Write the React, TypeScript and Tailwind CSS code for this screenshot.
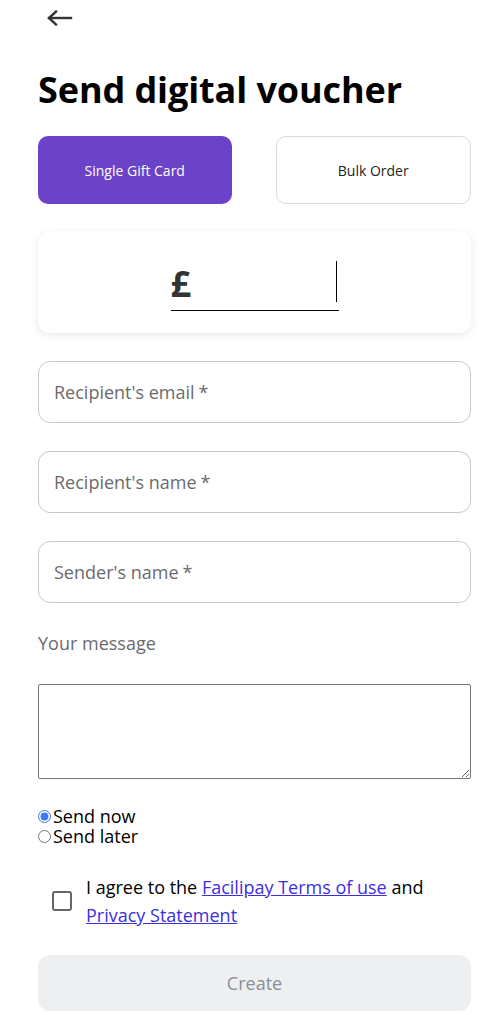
import { useState } from 'react'

const fieldLabels = ["Recipient's email", "Recipient's name", "Sender's name"]

export default function App() {
  const [tab, setTab] = useState<'single' | 'bulk'>('single')
  const [when, setWhen] = useState<'now' | 'later'>('now')
  const [agreed, setAgreed] = useState(false)

  return (
    <div className="min-h-screen bg-white font-['Open_Sans',sans-serif] text-black">
      <div className="pl-[38px] pr-[26px]">
        {/* Back */}
        <button className="mt-[6px] ml-[9px] flex h-[24px] w-[28px] items-center text-[#333]">
          <svg width="26" height="16" viewBox="0 0 26 16" fill="none" stroke="currentColor" strokeWidth="2.4" strokeLinecap="square">
            <path d="M2 8h22" />
            <path d="M9 1.5 2 8l7 6.5" />
          </svg>
        </button>

        <h1 className="mt-[36px] text-[36px] font-bold leading-[48px] tracking-[-0.1px]">Send digital voucher</h1>

        {/* Tabs */}
        <div className="mt-[22px] flex gap-[44px]">
          <button
            onClick={() => setTab('single')}
            className={`h-[68px] flex-1 rounded-[10px] text-[14px] ${tab === 'single' ? 'bg-[#6b43c9] text-white' : 'border border-[#d9dbe0] bg-white text-[#222]'}`}
          >
            Single Gift Card
          </button>
          <button
            onClick={() => setTab('bulk')}
            className={`h-[68px] flex-1 rounded-[10px] text-[14px] ${tab === 'bulk' ? 'bg-[#6b43c9] text-white' : 'border border-[#d9dbe0] bg-white text-[#222]'}`}
          >
            Bulk Order
          </button>
        </div>

        {/* Amount */}
        <div className="mt-[27px] flex h-[102px] items-center justify-center rounded-[12px] bg-white shadow-[0_2px_8px_rgba(0,0,0,0.09)]">
          <div className="relative mt-[6px] flex h-[52px] w-[168px] items-end border-b border-black">
            <span className="pb-[6px] text-[36px] font-bold leading-[40px] text-[#333]">£</span>
            <span className="absolute right-[2px] top-[2px] h-[41px] w-px bg-black" />
          </div>
        </div>

        {/* Inputs */}
        <div className="mt-[28px] flex flex-col gap-[28px]">
          {fieldLabels.map(label => (
            <div key={label} className="flex h-[62px] items-center rounded-[12px] border border-[#c8c8c8] px-[15px]">
              <span className="text-[18px] text-[#6b6b6b]">
                {label}<span className="ml-[4px]">*</span>
              </span>
            </div>
          ))}
        </div>

        <p className="mt-[26px] text-[18px] leading-[28px] text-[#6b6b6b]">Your message</p>

        <textarea className="mt-[27px] block h-[95px] w-full rounded-[2px] border border-[#767676] outline-none" />

        {/* Send when */}
        <div className="mt-[27px] flex flex-col text-[18px] leading-[20px]">
          <label className="flex items-center">
            <input type="radio" name="when" checked={when === 'now'} onChange={() => setWhen('now')} className="m-0 h-[13px] w-[13px] accent-[#3b7bf0]" />
            <span className="ml-[2px]">Send now</span>
          </label>
          <label className="flex items-center">
            <input type="radio" name="when" checked={when === 'later'} onChange={() => setWhen('later')} className="m-0 h-[13px] w-[13px]" />
            <span className="ml-[2px]">Send later</span>
          </label>
        </div>

        {/* Agree */}
        <div className="mt-[27px] flex items-center">
          <button
            onClick={() => setAgreed(!agreed)}
            className="ml-[14px] h-[20px] w-[20px] shrink-0 rounded-[3px] border-2 border-[#666]"
          >
            {agreed && <span className="block h-full w-full bg-[#666]" />}
          </button>
          <p className="ml-[14px] text-[18px] leading-[28px]">
            I agree to the <a href="#" className="text-[#3d2fe0] underline">Facilipay Terms of use</a> and{' '}
            <a href="#" className="text-[#3d2fe0] underline">Privacy Statement</a>
          </p>
        </div>

        <button className="mt-[26px] h-[56px] w-full rounded-[12px] bg-[#eeeff1] text-[18px] text-[#8a9099]" disabled>
          Create
        </button>
      </div>
    </div>
  )
}
